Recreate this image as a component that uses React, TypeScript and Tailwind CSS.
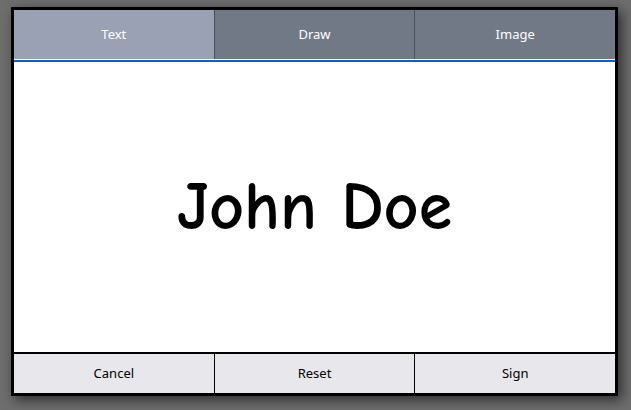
export default function App() {
  return (
    <div className="w-[631px] h-[410px] bg-[#6e6e6e] relative overflow-hidden" style={{ fontFamily: '"Noto Sans", "Open Sans", sans-serif' }}>
      <div className="absolute left-[11px] top-[7px] w-[607px] h-[389px] border-[3px] border-black bg-white flex flex-col shadow-[4px_4px_12px_rgba(0,0,0,0.6)]">
        <div className="flex h-[49px] text-[13px] text-white">
          <div className="flex-1 bg-[#99a1b2] flex items-center justify-center">Text</div>
          <div className="flex-1 bg-[#717986] border-l border-[#4a4f58] flex items-center justify-center">Draw</div>
          <div className="flex-1 bg-[#717986] border-l border-[#4a4f58] flex items-center justify-center">Image</div>
        </div>
        <div className="h-[3px] bg-[#0a5fd6] border-t border-white" />
        <div className="flex-1 flex items-center justify-center">
          <span className="text-[68px] text-black font-bold leading-none" style={{ fontFamily: '"Comic Sans MS", "Comic Neue", "DejaVu Sans", cursive' }}>John Doe</span>
        </div>
        <div className="flex h-[41px] border-t-2 border-black bg-[#e8e7ec] text-[13px] text-black">
          <div className="flex-1 flex items-center justify-center">Cancel</div>
          <div className="flex-1 border-l border-black flex items-center justify-center">Reset</div>
          <div className="flex-1 border-l border-black flex items-center justify-center">Sign</div>
        </div>
      </div>
    </div>
  );
}
